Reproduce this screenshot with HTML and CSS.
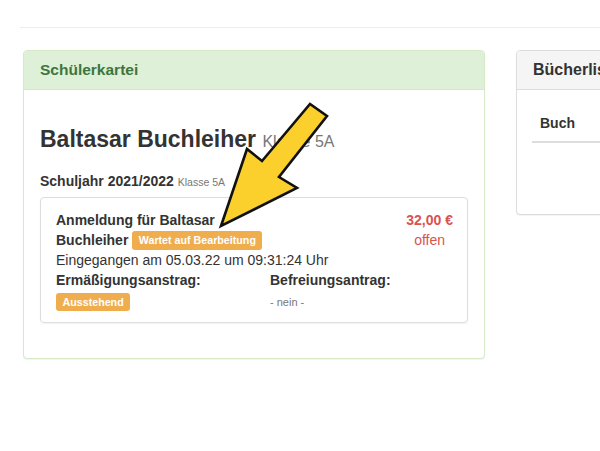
FILE: index.html
```html
<!DOCTYPE html>
<html lang="de">
<head>
<meta charset="utf-8">
<title>Schülerkartei</title>
<link rel="stylesheet" href="styles.css">
</head>
<body>
<div class="page">
  <hr class="rule">
  <div class="row">
    <section class="panel panel-success">
      <div class="panel-heading">Schülerkartei</div>
      <div class="panel-body">
        <h1 class="name">Baltasar Buchleiher <small>Klasse 5A</small></h1>
        <h4 class="year">Schuljahr 2021/2022 <small>Klasse 5A</small></h4>
        <div class="card">
          <div class="card-top">
            <div class="card-title"><strong>Anmeldung für Baltasar Buchleiher</strong> <span class="label">Wartet auf Bearbeitung</span></div>
            <div class="price"><strong>32,00 €</strong><span>offen</span></div>
          </div>
          <div class="received">Eingegangen am 05.03.22 um 09:31:24 Uhr</div>
          <div class="requests">
            <div class="req">
              <strong>Ermäßigungsanstrag:</strong>
              <div class="req-value"><span class="label">Ausstehend</span></div>
            </div>
            <div class="req">
              <strong>Befreiungsantrag:</strong>
              <div class="req-value"><span class="muted">- nein -</span></div>
            </div>
          </div>
        </div>
      </div>
    </section>
    <section class="panel panel-default">
      <div class="panel-heading">Bücherliste</div>
      <div class="panel-body side-body">
        <table class="table">
          <thead><tr><th>Buch</th><th>Status</th></tr></thead>
        </table>
      </div>
    </section>
  </div>
  <svg class="arrow" width="600" height="451" viewBox="0 0 600 451" aria-hidden="true">
    <polygon points="221,226 247,149 262,161 310,104 327,116 279,177 297,188" fill="#fbd02c" stroke="#111" stroke-width="2.6" stroke-linejoin="miter"/>
  </svg>
</div>
</body>
</html>
```
FILE: styles.css
```css
html, body {
  margin: 0;
  padding: 0;
  background: #fff;
}
body {
  font-family: "Liberation Sans", Arial, Helvetica, sans-serif;
  font-size: 14px;
  line-height: 20px;
  color: #333;
}
.page {
  position: relative;
  width: 600px;
  height: 451px;
  overflow: hidden;
  padding: 27px 0 0 20px;
  box-sizing: border-box;
}
.rule {
  margin: 0 0 22px 0;
  border: 0;
  border-top: 1px solid #eeeeee;
  height: 0;
  width: 700px;
}
.row {
  display: flex;
  gap: 31px;
  margin-left: 3px;
  align-items: flex-start;
}
.panel {
  border: 1px solid #ddd;
  border-radius: 4px;
  background: #fff;
  box-shadow: 0 1px 1px rgba(0,0,0,0.05);
  flex: none;
}
.panel-heading {
  padding: 10px 16px;
  font-size: 15.5px;
  line-height: 18px;
  font-weight: bold;
  border-bottom: 1px solid #ddd;
  border-radius: 3px 3px 0 0;
}
.panel-success {
  width: 462px;
  box-sizing: border-box;
  border-color: #d6e9c6;
}
.panel-success .panel-heading {
  background: #dff0d8;
  color: #3c763d;
  border-bottom-color: #d6e9c6;
}
.panel-default {
  width: 200px;
  box-sizing: border-box;
}
.panel-default .panel-heading {
  background: #f5f5f5;
  color: #333;
  font-size: 16px;
}
.panel-body {
  padding: 35px 16px 35px 16px;
}
.name {
  margin: 0;
  font-size: 23px;
  line-height: 28px;
  font-weight: bold;
  color: #333;
}
.name small {
  font-size: 16px;
  font-weight: normal;
  color: #777;
}
.year {
  margin: 15px 0 0 0;
  font-size: 14px;
  line-height: 20px;
  font-weight: bold;
}
.year small {
  font-size: 10.5px;
  font-weight: normal;
  color: #777;
}
.card {
  margin-top: 5px;
  border: 1px solid #ddd;
  border-radius: 4px;
  padding: 12px 14px 10px 15px;
  box-shadow: 0 1px 2px rgba(0,0,0,0.06);
}
.card-top {
  display: flex;
  justify-content: space-between;
  align-items: flex-start;
}
.card-title {
  width: 215px;
}
.label {
  display: inline-block;
  background: #f0ad4e;
  color: #fff;
  font-size: 10.7px;
  font-weight: bold;
  line-height: 1;
  padding: 4px 6.5px 4px;
  border-radius: 3px;
  vertical-align: 1px;
}
.price {
  display: flex;
  flex-direction: column;
  align-items: center;
  color: #d9534f;
}
.requests {
  display: grid;
  grid-template-columns: 214px 1fr;
}
.req-value {
  height: 20px;
  display: flex;
  align-items: center;
  padding-top: 2px;
}
.muted {
  color: #777;
  font-size: 11px;
}
.side-body {
  padding: 15px 15px 71px 15px;
}
.table {
  border-collapse: collapse;
  width: 260px;
}
.table th {
  text-align: left;
  padding: 8px;
  line-height: 20px;
  font-size: 14px;
  border-bottom: 2px solid #ddd;
}
.arrow {
  position: absolute;
  left: 0;
  top: 0;
  pointer-events: none;
}
```
